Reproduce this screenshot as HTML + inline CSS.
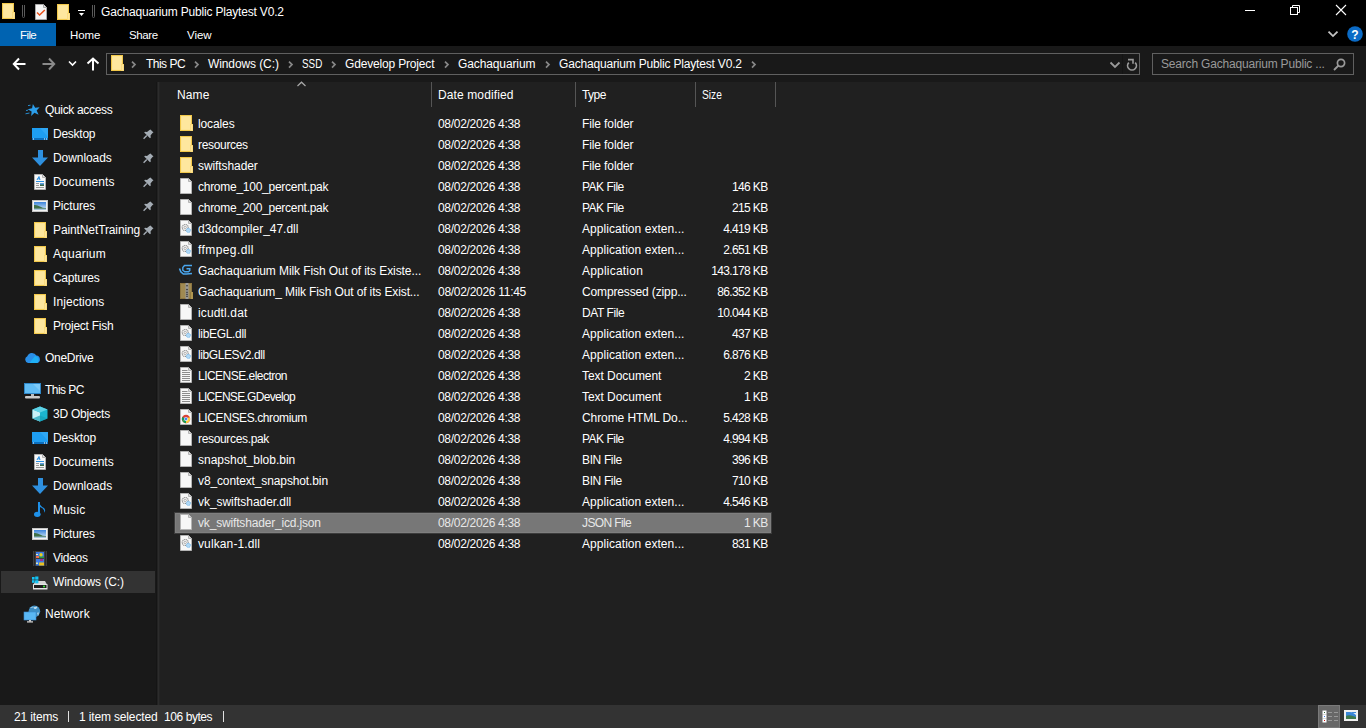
<!DOCTYPE html>
<html><head><meta charset="utf-8"><style>
html,body{margin:0;padding:0}
body{width:1366px;height:728px;overflow:hidden;position:relative;background:#202020;font-family:"Liberation Sans",sans-serif;}
.t{position:absolute;white-space:nowrap;line-height:1;}
.r{position:absolute}
.i{position:absolute;overflow:visible}
</style></head><body>
<svg width="0" height="0" style="position:absolute">
<symbol id="folder" viewBox="0 0 13 16">
 <rect x="0.5" y="0.5" width="11" height="15" fill="#fde28c" stroke="#f2c84a"/>
 <rect x="1.5" y="1.5" width="9" height="13" fill="#fee79e"/>
 <rect x="10" y="9" width="3" height="7" fill="#f6d064"/>
 <rect x="10.5" y="9.5" width="2" height="6" fill="#fde59a"/>
</symbol>
<symbol id="doc" viewBox="0 0 12 16">
 <path d="M0.5 0.5H8.5L11.5 3.5V15.5H0.5Z" fill="#f7f7f7" stroke="#b4b4b4"/>
 <path d="M8.5 0.5V3.5H11.5" fill="#d8d8d8" stroke="#b4b4b4"/>
</symbol>
<symbol id="dll" viewBox="0 0 12 16">
 <use href="#doc"/>
 <circle cx="5.2" cy="7.5" r="3" fill="none" stroke="#8e8e8e" stroke-width="1.1" stroke-dasharray="1.2 0.6"/>
 <circle cx="5.2" cy="7.5" r="1.2" fill="none" stroke="#a0a0a0" stroke-width="0.8"/>
 <circle cx="8.4" cy="10.4" r="2.1" fill="#b0d8f5" stroke="#64aee8" stroke-width="0.8" stroke-dasharray="1 0.5"/>
</symbol>
<symbol id="txt" viewBox="0 0 12 16">
 <use href="#doc"/>
 <path d="M2 3.5H7.5M2 5.5H10M2 7.5H10M2 9.5H10M2 11.5H10M2 13.5H10" stroke="#8c8c8c" stroke-width="1"/>
</symbol>
<symbol id="chromedoc" viewBox="0 0 12 16">
 <use href="#doc"/>
 <circle cx="6" cy="10" r="4.2" fill="#db4437"/>
 <path d="M6 10 L2.36 12.1 A4.2 4.2 0 0 1 2.36 7.9 Z" fill="#0f9d58"/>
 <path d="M6 10 L9.64 7.9 A4.2 4.2 0 0 1 6 14.2 L 2.36 12.1Z" fill="#ffcd40"/>
 <path d="M6 10 L2.36 12.1 A4.2 4.2 0 0 0 6 14.2Z" fill="#0f9d58"/>
 <circle cx="6" cy="10" r="1.9" fill="#fff"/>
 <circle cx="6" cy="10" r="1.4" fill="#4285f4"/>
</symbol>
</svg>
<div class="r" style="left:0px;top:0px;width:1366px;height:46px;background:#000;"></div>
<div class="r" style="left:0px;top:46px;width:1366px;height:36px;background:#191919;"></div>
<div class="r" style="left:0px;top:82px;width:157px;height:623px;background:#191919;"></div>
<div class="r" style="left:157px;top:82px;width:1209px;height:623px;background:#202020;"></div>
<div class="r" style="left:156px;top:82px;width:1px;height:623px;background:#151515;"></div>
<div class="r" style="left:157px;top:82px;width:1px;height:623px;background:#222;"></div>
<div class="r" style="left:158px;top:82px;width:1px;height:623px;background:#2c2c2c;"></div>
<div class="r" style="left:159px;top:82px;width:1px;height:623px;background:#242424;"></div>
<div class="r" style="left:0px;top:705px;width:1366px;height:23px;background:#333;"></div>
<svg class="i" style="left:2px;top:3px" width="13" height="16" viewBox="0 0 13 16"><use href="#folder"/></svg>
<svg class="i" style="left:22px;top:5px" width="3" height="13" viewBox="0 0 3 13"><path d="M0.5 0V11.5A1 1 0 0 0 2.5 11.5V0" fill="none" stroke="#5a5a5a" stroke-width="1"/></svg>
<svg class="i" style="left:35px;top:4px" width="12" height="16" viewBox="0 0 12 16"><path d="M0.5 0.5H8.5L11.5 3.5V15.5H0.5Z" fill="#f5f5f5" stroke="#a8a8a8"/><path d="M8.5 0.5V3.5H11.5" fill="#ddd" stroke="#a8a8a8"/><path d="M2 8.5L4.6 11L9.8 6" fill="none" stroke="#e8501a" stroke-width="1.5"/></svg>
<svg class="i" style="left:57px;top:4px" width="13" height="16" viewBox="0 0 13 16"><use href="#folder"/></svg>
<svg class="i" style="left:78px;top:9px" width="8" height="8" viewBox="0 0 8 8"><rect x="0" y="1" width="7" height="1" fill="#fff"/><path d="M1 4H6L3.5 7Z" fill="#fff"/></svg>
<svg class="i" style="left:92px;top:5px" width="3" height="13" viewBox="0 0 3 13"><path d="M0.5 0V11.5A1 1 0 0 0 2.5 11.5V0" fill="none" stroke="#5a5a5a" stroke-width="1"/></svg>
<div class="t" style="left:101px;top:5.84px;color:#fff;font-size:12px;letter-spacing:-0.18px;">Gachaquarium Public Playtest V0.2</div>
<div class="r" style="left:1245px;top:10px;width:10px;height:1px;background:#fff;"></div>
<svg class="i" style="left:1289px;top:4px" width="12" height="12" viewBox="0 0 12 12"><rect x="1.5" y="3.5" width="7" height="7" fill="none" stroke="#fff"/><path d="M3.5 3.5V1.5H10.5V8.5H8.5" fill="none" stroke="#fff"/></svg>
<svg class="i" style="left:1335px;top:4px" width="12" height="12" viewBox="0 0 12 12"><path d="M1 1L11 11M11 1L1 11" stroke="#fff" stroke-width="1.1"/></svg>
<div class="r" style="left:0px;top:23px;width:56px;height:23px;background:#0063b1;"></div>
<div class="t" style="left:20px;top:30.27px;color:#fff;font-size:11.5px;letter-spacing:-0.6px;">File</div>
<div class="t" style="left:70px;top:30.27px;color:#fff;font-size:11.5px;letter-spacing:-0.134px;">Home</div>
<div class="t" style="left:129px;top:30.27px;color:#fff;font-size:11.5px;letter-spacing:-0.4px;">Share</div>
<div class="t" style="left:187px;top:30.27px;color:#fff;font-size:11.5px;letter-spacing:-0.066px;">View</div>
<svg class="i" style="left:1327px;top:29px" width="12" height="10" viewBox="0 0 12 10"><path d="M1.5 2.6L6 7.1L10.5 2.6" fill="none" stroke="#c4c4c4" stroke-width="1.8"/></svg>
<svg class="i" style="left:1347px;top:26px" width="16" height="16" viewBox="0 0 16 16"><circle cx="8" cy="8" r="7.8" fill="#0b6bc6"/><text x="8" y="12.6" text-anchor="middle" font-family="Liberation Sans" font-weight="bold" font-size="12" fill="#fff">?</text></svg>
<svg class="i" style="left:12px;top:57px" width="14" height="14" viewBox="0 0 14 14"><path d="M7 1.5L1.8 7L7 12.5M2 7H13.5" fill="none" stroke="#fff" stroke-width="2"/></svg>
<svg class="i" style="left:42px;top:57px" width="14" height="14" viewBox="0 0 14 14"><path d="M7 1.5L12.2 7L7 12.5M12 7H0.5" fill="none" stroke="#8a8a8a" stroke-width="2"/></svg>
<svg class="i" style="left:68px;top:59px" width="9" height="8" viewBox="0 0 9 8"><path d="M1 2.5L4.5 6L8 2.5" fill="none" stroke="#fff" stroke-width="1.6"/></svg>
<svg class="i" style="left:86px;top:57px" width="14" height="14" viewBox="0 0 14 14"><path d="M1.5 6.5L7 1.5L12.5 6.5M7 2V13.5" fill="none" stroke="#fff" stroke-width="2"/></svg>
<div class="r" style="left:106px;top:53px;width:1034px;height:22px;background:transparent;border:1px solid #606060;box-sizing:border-box"></div>
<div class="r" style="left:1122px;top:54px;width:1px;height:20px;background:#141414;"></div>
<svg class="i" style="left:111px;top:55px" width="13" height="16" viewBox="0 0 13 16"><use href="#folder"/></svg>
<svg class="i" style="left:131px;top:61px" width="6" height="8" viewBox="0 0 6 8"><path d="M1 0.6L4 3.6L1 6.6" fill="none" stroke="#888" stroke-width="1.7"/></svg>
<svg class="i" style="left:194px;top:61px" width="6" height="8" viewBox="0 0 6 8"><path d="M1 0.6L4 3.6L1 6.6" fill="none" stroke="#888" stroke-width="1.7"/></svg>
<svg class="i" style="left:288px;top:61px" width="6" height="8" viewBox="0 0 6 8"><path d="M1 0.6L4 3.6L1 6.6" fill="none" stroke="#888" stroke-width="1.7"/></svg>
<svg class="i" style="left:331px;top:61px" width="6" height="8" viewBox="0 0 6 8"><path d="M1 0.6L4 3.6L1 6.6" fill="none" stroke="#888" stroke-width="1.7"/></svg>
<svg class="i" style="left:444px;top:61px" width="6" height="8" viewBox="0 0 6 8"><path d="M1 0.6L4 3.6L1 6.6" fill="none" stroke="#888" stroke-width="1.7"/></svg>
<svg class="i" style="left:545px;top:61px" width="6" height="8" viewBox="0 0 6 8"><path d="M1 0.6L4 3.6L1 6.6" fill="none" stroke="#888" stroke-width="1.7"/></svg>
<svg class="i" style="left:751px;top:61px" width="6" height="8" viewBox="0 0 6 8"><path d="M1 0.6L4 3.6L1 6.6" fill="none" stroke="#888" stroke-width="1.7"/></svg>
<div class="t" style="left:146px;top:57.84px;color:#fff;font-size:12px;letter-spacing:-0.516px;">This PC</div>
<div class="t" style="left:208px;top:57.84px;color:#fff;font-size:12px;letter-spacing:-0.1px;">Windows (C:)</div>
<div class="t" style="left:302px;top:57.84px;color:#fff;font-size:12px;letter-spacing:0.0px;transform:scaleX(0.82);transform-origin:0 0;">SSD</div>
<div class="t" style="left:345px;top:57.84px;color:#fff;font-size:12px;letter-spacing:-0.171px;">Gdevelop Project</div>
<div class="t" style="left:458px;top:57.84px;color:#fff;font-size:12px;letter-spacing:-0.112px;">Gachaquarium</div>
<div class="t" style="left:559px;top:57.84px;color:#fff;font-size:12px;letter-spacing:-0.18px;">Gachaquarium Public Playtest V0.2</div>
<svg class="i" style="left:1109px;top:61px" width="12" height="8" viewBox="0 0 12 8"><path d="M1.5 1.5L6 6L10.5 1.5" fill="none" stroke="#9a9a9a" stroke-width="1.8"/></svg>
<svg class="i" style="left:1126px;top:58px" width="12" height="13" viewBox="0 0 12 13"><path d="M2.8 4.6A4.4 4.4 0 1 0 9.2 4.6" fill="none" stroke="#9a9a9a" stroke-width="1.7"/><path d="M2 1.6H7V5.8" fill="none" stroke="#9a9a9a" stroke-width="1.6"/></svg>
<div class="r" style="left:1152px;top:53px;width:202px;height:22px;background:transparent;border:1px solid #606060;box-sizing:border-box"></div>
<div class="t" style="left:1161px;top:57.84px;color:#999;font-size:12px;letter-spacing:-0.189px;">Search Gachaquarium Public ...</div>
<svg class="i" style="left:1332px;top:58px" width="14" height="14" viewBox="0 0 14 14"><circle cx="9" cy="5" r="3.6" fill="none" stroke="#9a9a9a" stroke-width="1.7"/><path d="M6.5 7.5L2 12" stroke="#9a9a9a" stroke-width="1.8"/></svg>
<div class="r" style="left:1px;top:571px;width:154px;height:22px;background:#333;"></div>
<div class="t" style="left:45px;top:103.84px;color:#fff;font-size:12px;letter-spacing:-0.332px;">Quick access</div>
<svg class="i" style="left:25px;top:103px" width="17" height="14" viewBox="0 0 17 14"><path d="M7.89 0.90L10.18 4.77L14.65 4.20L11.67 7.58L13.60 11.65L9.47 9.86L6.19 12.95L6.62 8.47L2.66 6.31L7.06 5.32Z" fill="#2c9eea"/><path d="M3 2.6L5.5 2.2M1 7.5L3 7.2M0.5 10.8L4.5 10" stroke="#2c9eea" stroke-width="1" opacity="0.85"/></svg>
<div class="t" style="left:53px;top:127.84px;color:#fff;font-size:12px;letter-spacing:-0.251px;">Desktop</div>
<svg class="i" style="left:32px;top:128px" width="16" height="12" viewBox="0 0 16 12"><rect x="0" y="0" width="16" height="12" fill="#1e9ef2"/><path d="M8 0L16 0L16 9Z" fill="#3fb0f7" opacity="0.5"/><rect x="0" y="10" width="16" height="2" fill="#0b6fbf"/><rect x="1" y="10.5" width="1" height="1" fill="#fff"/><rect x="12" y="10.5" width="1" height="1" fill="#fff"/><rect x="14" y="10.5" width="1" height="1" fill="#fff"/></svg>
<div class="t" style="left:53px;top:151.84px;color:#fff;font-size:12px;letter-spacing:-0.073px;">Downloads</div>
<svg class="i" style="left:32px;top:150px" width="16" height="16" viewBox="0 0 16 16"><rect x="6" y="0" width="5" height="8" fill="#2e90df"/><path d="M0 7.5H16L8 16Z" fill="#2e90df"/></svg>
<div class="t" style="left:53px;top:175.84px;color:#fff;font-size:12px;letter-spacing:0.1px;">Documents</div>
<svg class="i" style="left:34px;top:174px" width="12" height="16" viewBox="0 0 12 16"><path d="M0.5 0.5H8.5L11.5 3.5V15.5H0.5Z" fill="#f7f7f7" stroke="#b0b0b0"/><path d="M8.5 0.5V3.5H11.5" fill="#ddd" stroke="#b0b0b0"/><path d="M3 6L5 2.5L6 6M3.5 4.8H6" stroke="#2b8fe0" fill="none" stroke-width="1"/><rect x="2" y="7" width="8" height="1" fill="#2b8fe0"/><path d="M2 9.5H5M2 11.5H5M2 13.5H10" stroke="#9a9a9a"/><rect x="6" y="9" width="4" height="3" fill="#5a9ee0"/><rect x="6" y="10.5" width="4" height="1.5" fill="#3a6a48"/></svg>
<div class="t" style="left:53px;top:199.84px;color:#fff;font-size:12px;letter-spacing:-0.15px;">Pictures</div>
<svg class="i" style="left:32px;top:200px" width="16" height="12" viewBox="0 0 16 12"><defs><linearGradient id="sky" x1="0" y1="0" x2="0" y2="1"><stop offset="0" stop-color="#3b82da"/><stop offset="1" stop-color="#d8ecf8"/></linearGradient></defs><rect x="0.5" y="0.5" width="15" height="11" fill="#f2f2f2" stroke="#c4c4c4"/><rect x="2" y="2" width="12" height="8" fill="url(#sky)"/><path d="M2 5Q5 4.5 8 6.5Q11 8.2 14 8V10H2Z" fill="#3f7049"/><path d="M2 8.6H14V10H2Z" fill="#a8c6dc"/></svg>
<div class="t" style="left:53px;top:223.84px;color:#fff;font-size:12px;letter-spacing:-0.111px;">PaintNetTraining</div>
<svg class="i" style="left:34px;top:222px" width="13" height="16" viewBox="0 0 13 16"><use href="#folder"/></svg>
<div class="t" style="left:53px;top:247.84px;color:#fff;font-size:12px;letter-spacing:0.193px;">Aquarium</div>
<svg class="i" style="left:34px;top:246px" width="13" height="16" viewBox="0 0 13 16"><use href="#folder"/></svg>
<div class="t" style="left:53px;top:271.84px;color:#fff;font-size:12px;letter-spacing:-0.293px;">Captures</div>
<svg class="i" style="left:34px;top:270px" width="13" height="16" viewBox="0 0 13 16"><use href="#folder"/></svg>
<div class="t" style="left:53px;top:295.84px;color:#fff;font-size:12px;letter-spacing:0.072px;">Injections</div>
<svg class="i" style="left:34px;top:294px" width="13" height="16" viewBox="0 0 13 16"><use href="#folder"/></svg>
<div class="t" style="left:53px;top:319.84px;color:#fff;font-size:12px;letter-spacing:-0.24px;">Project Fish</div>
<svg class="i" style="left:34px;top:318px" width="13" height="16" viewBox="0 0 13 16"><use href="#folder"/></svg>
<div class="t" style="left:45px;top:351.84px;color:#fff;font-size:12px;letter-spacing:-0.293px;">OneDrive</div>
<svg class="i" style="left:24px;top:352px" width="17" height="11" viewBox="0 0 17 11"><path d="M4 11A3.6 3.6 0 0 1 3.3 4.2A5 5 0 0 1 12.4 3.6A3.8 3.8 0 0 1 13.3 11Z" fill="#2a8fe8"/><path d="M5.5 11L11 4A4 4 0 0 1 13.3 11Z" fill="#1fb0f5"/></svg>
<div class="t" style="left:45px;top:383.84px;color:#fff;font-size:12px;letter-spacing:-0.551px;">This PC</div>
<svg class="i" style="left:24px;top:383px" width="17" height="16" viewBox="0 0 17 16"><rect x="0.5" y="0.5" width="16" height="10" fill="#62bdf5" stroke="#2f87c8"/><path d="M9 1L16 1L16 8Z" fill="#8fd2fa" opacity="0.6"/><rect x="7" y="11" width="3" height="2" fill="#bbb"/><rect x="1" y="13" width="15" height="2.5" rx="1" fill="#c9c9c9"/></svg>
<div class="t" style="left:53px;top:407.84px;color:#fff;font-size:12px;letter-spacing:-0.238px;">3D Objects</div>
<svg class="i" style="left:32px;top:406px" width="16" height="16" viewBox="0 0 16 16"><path d="M8 0.5L15.5 3.5V12.5L8 15.5L0.5 12.5V3.5Z" fill="#1bb5d0"/><path d="M0.5 3.5L8 6.5V15.5L0.5 12.5Z" fill="#c8f0f6"/><path d="M8 0.5L15.5 3.5L8 6.5L0.5 3.5Z" fill="#5fd2e6"/><path d="M0.5 12.5L8 9.5L15.5 12.5L8 15.5Z" fill="#15a0b8" opacity="0.7"/></svg>
<div class="t" style="left:53px;top:431.84px;color:#fff;font-size:12px;letter-spacing:-0.15px;">Desktop</div>
<svg class="i" style="left:32px;top:432px" width="16" height="12" viewBox="0 0 16 12"><rect x="0" y="0" width="16" height="12" fill="#1e9ef2"/><path d="M8 0L16 0L16 9Z" fill="#3fb0f7" opacity="0.5"/><rect x="0" y="10" width="16" height="2" fill="#0b6fbf"/><rect x="1" y="10.5" width="1" height="1" fill="#fff"/><rect x="12" y="10.5" width="1" height="1" fill="#fff"/><rect x="14" y="10.5" width="1" height="1" fill="#fff"/></svg>
<div class="t" style="left:53px;top:455.84px;color:#fff;font-size:12px;letter-spacing:-0.0px;">Documents</div>
<svg class="i" style="left:34px;top:454px" width="12" height="16" viewBox="0 0 12 16"><path d="M0.5 0.5H8.5L11.5 3.5V15.5H0.5Z" fill="#f7f7f7" stroke="#b0b0b0"/><path d="M8.5 0.5V3.5H11.5" fill="#ddd" stroke="#b0b0b0"/><path d="M3 6L5 2.5L6 6M3.5 4.8H6" stroke="#2b8fe0" fill="none" stroke-width="1"/><rect x="2" y="7" width="8" height="1" fill="#2b8fe0"/><path d="M2 9.5H5M2 11.5H5M2 13.5H10" stroke="#9a9a9a"/><rect x="6" y="9" width="4" height="3" fill="#5a9ee0"/><rect x="6" y="10.5" width="4" height="1.5" fill="#3a6a48"/></svg>
<div class="t" style="left:53px;top:479.84px;color:#fff;font-size:12px;letter-spacing:-0.025px;">Downloads</div>
<svg class="i" style="left:32px;top:478px" width="16" height="16" viewBox="0 0 16 16"><rect x="6" y="0" width="5" height="8" fill="#2e90df"/><path d="M0 7.5H16L8 16Z" fill="#2e90df"/></svg>
<div class="t" style="left:53px;top:503.84px;color:#fff;font-size:12px;letter-spacing:0.2px;">Music</div>
<svg class="i" style="left:34px;top:501px" width="12" height="17" viewBox="0 0 12 17"><path d="M5 1V12" stroke="#1e90e8" stroke-width="2"/><ellipse cx="3.3" cy="13.3" rx="3.3" ry="2.6" fill="#1e90e8"/><path d="M5 1Q6 5 10 7Q12 9 10.5 12Q11 8 6 6Z" fill="#1e90e8"/></svg>
<div class="t" style="left:53px;top:527.84px;color:#fff;font-size:12px;letter-spacing:-0.206px;">Pictures</div>
<svg class="i" style="left:32px;top:528px" width="16" height="12" viewBox="0 0 16 12"><defs><linearGradient id="sky" x1="0" y1="0" x2="0" y2="1"><stop offset="0" stop-color="#3b82da"/><stop offset="1" stop-color="#d8ecf8"/></linearGradient></defs><rect x="0.5" y="0.5" width="15" height="11" fill="#f2f2f2" stroke="#c4c4c4"/><rect x="2" y="2" width="12" height="8" fill="url(#sky)"/><path d="M2 5Q5 4.5 8 6.5Q11 8.2 14 8V10H2Z" fill="#3f7049"/><path d="M2 8.6H14V10H2Z" fill="#a8c6dc"/></svg>
<div class="t" style="left:53px;top:551.84px;color:#fff;font-size:12px;letter-spacing:-0.31px;">Videos</div>
<svg class="i" style="left:33px;top:551px" width="14" height="15" viewBox="0 0 14 15"><rect x="0" y="0" width="14" height="15" fill="#3e3e3e"/><path d="M1.5 0.5V15M12.5 0.5V15" stroke="#121212" stroke-dasharray="1 1"/><rect x="3" y="1" width="8" height="6" fill="#3d7be2"/><rect x="3" y="8" width="8" height="6.5" fill="#3d7be2"/><rect x="3" y="5" width="3" height="2" fill="#f07050"/><rect x="6" y="5.5" width="5" height="1.5" fill="#2a9a40"/><circle cx="8" cy="3.8" r="1.7" fill="#e6d020"/><rect x="3" y="3" width="2" height="1" fill="#e8f0c0"/><rect x="7" y="8" width="3" height="2" fill="#a03090"/><rect x="6" y="11.5" width="5" height="3" fill="#e8c020"/><rect x="3" y="11.5" width="2" height="1.5" fill="#d8e8b8"/></svg>
<div class="t" style="left:53px;top:575.84px;color:#fff;font-size:12px;letter-spacing:-0.097px;">Windows (C:)</div>
<svg class="i" style="left:31px;top:571px" width="17" height="19" viewBox="0 0 17 19"><path d="M2.5 13.5L4.5 10H14L16 13.5Z" fill="#d6d6d6"/><rect x="2" y="13" width="14.5" height="5.5" rx="0.6" fill="#e4e4e4"/><rect x="3" y="14" width="12.5" height="3" fill="#1c1c1c"/><circle cx="13" cy="15.5" r="1" fill="#3ef03e"/><rect x="1" y="6" width="2.6" height="2.6" fill="#12c3f4"/><rect x="4.2" y="5.5" width="3.2" height="3.1" fill="#12c3f4"/><rect x="1" y="9.2" width="2.6" height="2.6" fill="#12c3f4"/><rect x="4.2" y="9.2" width="3.2" height="3.1" fill="#12c3f4"/></svg>
<div class="t" style="left:45px;top:607.84px;color:#fff;font-size:12px;letter-spacing:0.116px;">Network</div>
<svg class="i" style="left:23px;top:601px" width="18" height="22" viewBox="0 0 18 22"><circle cx="11.4" cy="10.3" r="5.8" fill="#3d8ec4"/><path d="M7 7Q9 5 11 6Q10 8 13 8Q15 6 14 5.5Z" fill="#d8f0fb" opacity="0.8"/><path d="M15.5 11Q16.5 13 15 15L14 12Z" fill="#d8f0fb" opacity="0.7"/><rect x="1" y="11" width="12" height="8" fill="#5ab8f5" stroke="#3a8ad0" stroke-width="0.6"/><rect x="6" y="19" width="2" height="1.5" fill="#ccc"/><rect x="4" y="20.3" width="6" height="1.2" fill="#ddd"/></svg>
<svg class="i" style="left:143px;top:129px" width="11" height="11" viewBox="0 0 11 11"><path d="M7.5 0.5L10.5 3.5L9.5 4L7.5 6.5L7.8 8.5L7 9.3L1.2 3.5L2 2.7L4 3L6.5 1Z" fill="#a4acb4"/><path d="M3.8 6.6L0.6 9.8" stroke="#a4acb4" stroke-width="1.4"/></svg>
<svg class="i" style="left:143px;top:153px" width="11" height="11" viewBox="0 0 11 11"><path d="M7.5 0.5L10.5 3.5L9.5 4L7.5 6.5L7.8 8.5L7 9.3L1.2 3.5L2 2.7L4 3L6.5 1Z" fill="#a4acb4"/><path d="M3.8 6.6L0.6 9.8" stroke="#a4acb4" stroke-width="1.4"/></svg>
<svg class="i" style="left:143px;top:177px" width="11" height="11" viewBox="0 0 11 11"><path d="M7.5 0.5L10.5 3.5L9.5 4L7.5 6.5L7.8 8.5L7 9.3L1.2 3.5L2 2.7L4 3L6.5 1Z" fill="#a4acb4"/><path d="M3.8 6.6L0.6 9.8" stroke="#a4acb4" stroke-width="1.4"/></svg>
<svg class="i" style="left:143px;top:201px" width="11" height="11" viewBox="0 0 11 11"><path d="M7.5 0.5L10.5 3.5L9.5 4L7.5 6.5L7.8 8.5L7 9.3L1.2 3.5L2 2.7L4 3L6.5 1Z" fill="#a4acb4"/><path d="M3.8 6.6L0.6 9.8" stroke="#a4acb4" stroke-width="1.4"/></svg>
<svg class="i" style="left:143px;top:225px" width="11" height="11" viewBox="0 0 11 11"><path d="M7.5 0.5L10.5 3.5L9.5 4L7.5 6.5L7.8 8.5L7 9.3L1.2 3.5L2 2.7L4 3L6.5 1Z" fill="#a4acb4"/><path d="M3.8 6.6L0.6 9.8" stroke="#a4acb4" stroke-width="1.4"/></svg>
<svg class="i" style="left:296px;top:81px" width="11" height="7" viewBox="0 0 11 7"><path d="M1.5 5L5.5 1.2L9.5 5" fill="none" stroke="#a8a8a8" stroke-width="1.2"/></svg>
<div class="t" style="left:177px;top:88.84px;color:#fff;font-size:12px;letter-spacing:0.118px;">Name</div>
<div class="t" style="left:438px;top:88.84px;color:#fff;font-size:12px;letter-spacing:0.116px;">Date modified</div>
<div class="t" style="left:582px;top:88.84px;color:#fff;font-size:12px;letter-spacing:-0.567px;">Type</div>
<div class="t" style="left:702px;top:88.84px;color:#fff;font-size:12px;letter-spacing:0.0px;transform:scaleX(0.85);transform-origin:0 0;">Size</div>
<div class="r" style="left:431px;top:82px;width:1px;height:25px;background:#555;"></div>
<div class="r" style="left:575px;top:82px;width:1px;height:25px;background:#555;"></div>
<div class="r" style="left:695px;top:82px;width:1px;height:25px;background:#555;"></div>
<div class="r" style="left:775px;top:82px;width:1px;height:25px;background:#555;"></div>
<svg class="i" style="left:180px;top:115px" width="13" height="16" viewBox="0 0 13 16"><use href="#folder"/></svg>
<div class="t" style="left:198px;top:117.84px;color:#fff;font-size:12px;letter-spacing:-0.117px;">locales</div>
<div class="t" style="left:438px;top:117.84px;color:#fff;font-size:12px;letter-spacing:-0.3px;">08/02/2026 4:38</div>
<div class="t" style="left:582px;top:117.84px;color:#fff;font-size:12px;letter-spacing:-0.11px;">File folder</div>
<svg class="i" style="left:180px;top:136px" width="13" height="16" viewBox="0 0 13 16"><use href="#folder"/></svg>
<div class="t" style="left:198px;top:138.84px;color:#fff;font-size:12px;letter-spacing:-0.323px;">resources</div>
<div class="t" style="left:438px;top:138.84px;color:#fff;font-size:12px;letter-spacing:-0.3px;">08/02/2026 4:38</div>
<div class="t" style="left:582px;top:138.84px;color:#fff;font-size:12px;letter-spacing:-0.11px;">File folder</div>
<svg class="i" style="left:180px;top:157px" width="13" height="16" viewBox="0 0 13 16"><use href="#folder"/></svg>
<div class="t" style="left:198px;top:159.84px;color:#fff;font-size:12px;letter-spacing:-0.09px;">swiftshader</div>
<div class="t" style="left:438px;top:159.84px;color:#fff;font-size:12px;letter-spacing:-0.3px;">08/02/2026 4:38</div>
<div class="t" style="left:582px;top:159.84px;color:#fff;font-size:12px;letter-spacing:-0.11px;">File folder</div>
<svg class="i" style="left:180px;top:178px" width="12" height="16" viewBox="0 0 12 16"><use href="#doc"/></svg>
<div class="t" style="left:198px;top:180.84px;color:#fff;font-size:12px;letter-spacing:-0.265px;">chrome_100_percent.pak</div>
<div class="t" style="left:438px;top:180.84px;color:#fff;font-size:12px;letter-spacing:-0.3px;">08/02/2026 4:38</div>
<div class="t" style="left:582px;top:180.84px;color:#fff;font-size:12px;letter-spacing:-0.506px;">PAK File</div>
<div class="t" style="right:598.5px;top:180.84px;color:#fff;font-size:12px;letter-spacing:-0.65px;">146 KB</div>
<svg class="i" style="left:180px;top:199px" width="12" height="16" viewBox="0 0 12 16"><use href="#doc"/></svg>
<div class="t" style="left:198px;top:201.84px;color:#fff;font-size:12px;letter-spacing:-0.265px;">chrome_200_percent.pak</div>
<div class="t" style="left:438px;top:201.84px;color:#fff;font-size:12px;letter-spacing:-0.3px;">08/02/2026 4:38</div>
<div class="t" style="left:582px;top:201.84px;color:#fff;font-size:12px;letter-spacing:-0.506px;">PAK File</div>
<div class="t" style="right:598.5px;top:201.84px;color:#fff;font-size:12px;letter-spacing:-0.65px;">215 KB</div>
<svg class="i" style="left:180px;top:220px" width="12" height="16" viewBox="0 0 12 16"><use href="#dll"/></svg>
<div class="t" style="left:198px;top:222.84px;color:#fff;font-size:12px;letter-spacing:-0.021px;">d3dcompiler_47.dll</div>
<div class="t" style="left:438px;top:222.84px;color:#fff;font-size:12px;letter-spacing:-0.3px;">08/02/2026 4:38</div>
<div class="t" style="left:582px;top:222.84px;color:#fff;font-size:12px;letter-spacing:0.055px;">Application exten...</div>
<div class="t" style="right:598.5px;top:222.84px;color:#fff;font-size:12px;letter-spacing:-0.65px;">4.419 KB</div>
<svg class="i" style="left:180px;top:241px" width="12" height="16" viewBox="0 0 12 16"><use href="#dll"/></svg>
<div class="t" style="left:198px;top:243.84px;color:#fff;font-size:12px;letter-spacing:0.406px;">ffmpeg.dll</div>
<div class="t" style="left:438px;top:243.84px;color:#fff;font-size:12px;letter-spacing:-0.3px;">08/02/2026 4:38</div>
<div class="t" style="left:582px;top:243.84px;color:#fff;font-size:12px;letter-spacing:0.055px;">Application exten...</div>
<div class="t" style="right:598.5px;top:243.84px;color:#fff;font-size:12px;letter-spacing:-0.65px;">2.651 KB</div>
<svg class="i" style="left:177px;top:262px" width="16" height="14" viewBox="0 0 16 14"><path d="M15 3.5H7.5L5.8 5.5V8.2L7.8 9.8H11.6L12.8 8.4V6.8H9.5" fill="none" stroke="#4aa6ee" stroke-width="1.4"/><path d="M2.5 6.5L3.8 9.8L6.3 12H9.5L15 11.5" fill="none" stroke="#4aa6ee" stroke-width="1.6"/></svg>
<div class="t" style="left:198px;top:264.84px;color:#fff;font-size:12px;letter-spacing:-0.083px;">Gachaquarium Milk Fish Out of its Existe...</div>
<div class="t" style="left:438px;top:264.84px;color:#fff;font-size:12px;letter-spacing:-0.3px;">08/02/2026 4:38</div>
<div class="t" style="left:582px;top:264.84px;color:#fff;font-size:12px;letter-spacing:0.21px;">Application</div>
<div class="t" style="right:598.5px;top:264.84px;color:#fff;font-size:12px;letter-spacing:-0.65px;">143.178 KB</div>
<svg class="i" style="left:180px;top:283px" width="13" height="16" viewBox="0 0 13 16"><rect x="0" y="0" width="12" height="16" fill="#a08a52"/><rect x="0.5" y="0.5" width="11" height="15" fill="none" stroke="#8c7540"/><rect x="5.5" y="0" width="3" height="16" fill="#9a9a9a"/><circle cx="7" cy="2.8" r="0.8" fill="#2a2a2a"/><circle cx="7" cy="6.6" r="0.8" fill="#2a2a2a"/><path d="M6 9.5L7 9M7 9L8 9.5M6 11.5L7 11M7 11L8 11.5M6 13.5L7 13M7 13L8 13.5" stroke="#303030" stroke-width="0.9"/><rect x="10" y="9" width="3" height="7" fill="#b09650"/><path d="M10.5 9V16" stroke="#8c7540" stroke-width="0.8"/></svg>
<div class="t" style="left:198px;top:285.84px;color:#fff;font-size:12px;letter-spacing:-0.122px;">Gachaquarium_ Milk Fish Out of its Exist...</div>
<div class="t" style="left:438px;top:285.84px;color:#fff;font-size:12px;letter-spacing:-0.286px;">08/02/2026 11:45</div>
<div class="t" style="left:582px;top:285.84px;color:#fff;font-size:12px;letter-spacing:-0.138px;">Compressed (zipp...</div>
<div class="t" style="right:598.5px;top:285.84px;color:#fff;font-size:12px;letter-spacing:-0.65px;">86.352 KB</div>
<svg class="i" style="left:180px;top:304px" width="12" height="16" viewBox="0 0 12 16"><use href="#doc"/></svg>
<div class="t" style="left:198px;top:306.84px;color:#fff;font-size:12px;letter-spacing:0.139px;">icudtl.dat</div>
<div class="t" style="left:438px;top:306.84px;color:#fff;font-size:12px;letter-spacing:-0.3px;">08/02/2026 4:38</div>
<div class="t" style="left:582px;top:306.84px;color:#fff;font-size:12px;letter-spacing:-0.422px;">DAT File</div>
<div class="t" style="right:598.5px;top:306.84px;color:#fff;font-size:12px;letter-spacing:-0.65px;">10.044 KB</div>
<svg class="i" style="left:180px;top:325px" width="12" height="16" viewBox="0 0 12 16"><use href="#dll"/></svg>
<div class="t" style="left:198px;top:327.84px;color:#fff;font-size:12px;letter-spacing:-0.327px;">libEGL.dll</div>
<div class="t" style="left:438px;top:327.84px;color:#fff;font-size:12px;letter-spacing:-0.3px;">08/02/2026 4:38</div>
<div class="t" style="left:582px;top:327.84px;color:#fff;font-size:12px;letter-spacing:0.055px;">Application exten...</div>
<div class="t" style="right:598.5px;top:327.84px;color:#fff;font-size:12px;letter-spacing:-0.65px;">437 KB</div>
<svg class="i" style="left:180px;top:346px" width="12" height="16" viewBox="0 0 12 16"><use href="#dll"/></svg>
<div class="t" style="left:198px;top:348.84px;color:#fff;font-size:12px;letter-spacing:-0.4px;">libGLESv2.dll</div>
<div class="t" style="left:438px;top:348.84px;color:#fff;font-size:12px;letter-spacing:-0.3px;">08/02/2026 4:38</div>
<div class="t" style="left:582px;top:348.84px;color:#fff;font-size:12px;letter-spacing:0.055px;">Application exten...</div>
<div class="t" style="right:598.5px;top:348.84px;color:#fff;font-size:12px;letter-spacing:-0.65px;">6.876 KB</div>
<svg class="i" style="left:180px;top:367px" width="12" height="16" viewBox="0 0 12 16"><use href="#txt"/></svg>
<div class="t" style="left:198px;top:369.84px;color:#fff;font-size:12px;letter-spacing:-0.524px;">LICENSE.electron</div>
<div class="t" style="left:438px;top:369.84px;color:#fff;font-size:12px;letter-spacing:-0.3px;">08/02/2026 4:38</div>
<div class="t" style="left:582px;top:369.84px;color:#fff;font-size:12px;letter-spacing:-0.05px;">Text Document</div>
<div class="t" style="right:598.5px;top:369.84px;color:#fff;font-size:12px;letter-spacing:-0.65px;">2 KB</div>
<svg class="i" style="left:180px;top:388px" width="12" height="16" viewBox="0 0 12 16"><use href="#txt"/></svg>
<div class="t" style="left:198px;top:390.84px;color:#fff;font-size:12px;letter-spacing:-0.696px;">LICENSE.GDevelop</div>
<div class="t" style="left:438px;top:390.84px;color:#fff;font-size:12px;letter-spacing:-0.3px;">08/02/2026 4:38</div>
<div class="t" style="left:582px;top:390.84px;color:#fff;font-size:12px;letter-spacing:-0.05px;">Text Document</div>
<div class="t" style="right:598.5px;top:390.84px;color:#fff;font-size:12px;letter-spacing:-0.65px;">1 KB</div>
<svg class="i" style="left:180px;top:409px" width="12" height="16" viewBox="0 0 12 16"><use href="#chromedoc"/></svg>
<div class="t" style="left:198px;top:411.84px;color:#fff;font-size:12px;letter-spacing:-0.386px;">LICENSES.chromium</div>
<div class="t" style="left:438px;top:411.84px;color:#fff;font-size:12px;letter-spacing:-0.3px;">08/02/2026 4:38</div>
<div class="t" style="left:582px;top:411.84px;color:#fff;font-size:12px;letter-spacing:-0.087px;">Chrome HTML Do...</div>
<div class="t" style="right:598.5px;top:411.84px;color:#fff;font-size:12px;letter-spacing:-0.65px;">5.428 KB</div>
<svg class="i" style="left:180px;top:430px" width="12" height="16" viewBox="0 0 12 16"><use href="#doc"/></svg>
<div class="t" style="left:198px;top:432.84px;color:#fff;font-size:12px;letter-spacing:-0.334px;">resources.pak</div>
<div class="t" style="left:438px;top:432.84px;color:#fff;font-size:12px;letter-spacing:-0.3px;">08/02/2026 4:38</div>
<div class="t" style="left:582px;top:432.84px;color:#fff;font-size:12px;letter-spacing:-0.506px;">PAK File</div>
<div class="t" style="right:598.5px;top:432.84px;color:#fff;font-size:12px;letter-spacing:-0.65px;">4.994 KB</div>
<svg class="i" style="left:180px;top:451px" width="12" height="16" viewBox="0 0 12 16"><use href="#doc"/></svg>
<div class="t" style="left:198px;top:453.84px;color:#fff;font-size:12px;letter-spacing:-0.011px;">snapshot_blob.bin</div>
<div class="t" style="left:438px;top:453.84px;color:#fff;font-size:12px;letter-spacing:-0.3px;">08/02/2026 4:38</div>
<div class="t" style="left:582px;top:453.84px;color:#fff;font-size:12px;letter-spacing:-0.363px;">BIN File</div>
<div class="t" style="right:598.5px;top:453.84px;color:#fff;font-size:12px;letter-spacing:-0.65px;">396 KB</div>
<svg class="i" style="left:180px;top:472px" width="12" height="16" viewBox="0 0 12 16"><use href="#doc"/></svg>
<div class="t" style="left:198px;top:474.84px;color:#fff;font-size:12px;letter-spacing:-0.123px;">v8_context_snapshot.bin</div>
<div class="t" style="left:438px;top:474.84px;color:#fff;font-size:12px;letter-spacing:-0.3px;">08/02/2026 4:38</div>
<div class="t" style="left:582px;top:474.84px;color:#fff;font-size:12px;letter-spacing:-0.363px;">BIN File</div>
<div class="t" style="right:598.5px;top:474.84px;color:#fff;font-size:12px;letter-spacing:-0.65px;">710 KB</div>
<svg class="i" style="left:180px;top:493px" width="12" height="16" viewBox="0 0 12 16"><use href="#dll"/></svg>
<div class="t" style="left:198px;top:495.84px;color:#fff;font-size:12px;letter-spacing:-0.045px;">vk_swiftshader.dll</div>
<div class="t" style="left:438px;top:495.84px;color:#fff;font-size:12px;letter-spacing:-0.3px;">08/02/2026 4:38</div>
<div class="t" style="left:582px;top:495.84px;color:#fff;font-size:12px;letter-spacing:0.055px;">Application exten...</div>
<div class="t" style="right:598.5px;top:495.84px;color:#fff;font-size:12px;letter-spacing:-0.65px;">4.546 KB</div>
<div class="r" style="left:174px;top:512px;width:598px;height:22px;background:#777;border:1px solid #3c3c3c;box-shadow:inset 0 0 0 1px #7f7f7f;box-sizing:border-box"></div>
<svg class="i" style="left:180px;top:514px" width="12" height="16" viewBox="0 0 12 16"><use href="#doc"/></svg>
<div class="t" style="left:198px;top:516.84px;color:#e8e8e8;font-size:12px;letter-spacing:-0.168px;">vk_swiftshader_icd.json</div>
<div class="t" style="left:438px;top:516.84px;color:#e8e8e8;font-size:12px;letter-spacing:-0.3px;">08/02/2026 4:38</div>
<div class="t" style="left:582px;top:516.84px;color:#e8e8e8;font-size:12px;letter-spacing:-0.623px;">JSON File</div>
<div class="t" style="right:598.5px;top:516.84px;color:#e8e8e8;font-size:12px;letter-spacing:-0.65px;">1 KB</div>
<svg class="i" style="left:180px;top:535px" width="12" height="16" viewBox="0 0 12 16"><use href="#dll"/></svg>
<div class="t" style="left:198px;top:537.84px;color:#fff;font-size:12px;letter-spacing:0.122px;">vulkan-1.dll</div>
<div class="t" style="left:438px;top:537.84px;color:#fff;font-size:12px;letter-spacing:-0.3px;">08/02/2026 4:38</div>
<div class="t" style="left:582px;top:537.84px;color:#fff;font-size:12px;letter-spacing:0.055px;">Application exten...</div>
<div class="t" style="right:598.5px;top:537.84px;color:#fff;font-size:12px;letter-spacing:-0.65px;">831 KB</div>
<div class="t" style="left:14px;top:710.84px;color:#fff;font-size:12px;letter-spacing:-0.15px;">21 items</div>
<div class="r" style="left:68px;top:711px;width:1px;height:11px;background:#e0e0e0;"></div>
<div class="t" style="left:79px;top:710.84px;color:#fff;font-size:12px;letter-spacing:-0.15px;">1 item selected</div>
<div class="t" style="left:164px;top:710.84px;color:#fff;font-size:12px;letter-spacing:-0.427px;">106 bytes</div>
<div class="r" style="left:223px;top:711px;width:1px;height:11px;background:#e0e0e0;"></div>
<div class="r" style="left:1318px;top:705px;width:22px;height:23px;background:#686868;border:1px solid #7a7a7a;box-sizing:border-box"></div>
<svg class="i" style="left:1321px;top:709px" width="16" height="16" viewBox="0 0 16 16"><rect x="1.5" y="1.5" width="4" height="4" fill="#fff"/><rect x="1.5" y="5.5" width="4" height="4" fill="#fff"/><rect x="1.5" y="9.5" width="4" height="4" fill="#fff"/><rect x="3" y="3" width="1" height="1" fill="#3a6a3a"/><rect x="3" y="7" width="1" height="1" fill="#3a7ae8"/><rect x="3" y="11" width="1" height="1" fill="#d01010"/><path d="M7 3.5H11M13 3.5H17M7 7.5H11M13 7.5H17M7 11.5H11M13 11.5H17" stroke="#999"/></svg>
<svg class="i" style="left:1344px;top:710px" width="14" height="12" viewBox="0 0 14 12"><rect x="0" y="0" width="14" height="11" fill="#f0f0f0"/><rect x="2" y="2" width="10" height="7" fill="#3a86d8"/><path d="M2 6Q5 4 12 7V9H2Z" fill="#3f7a4f"/><path d="M6 3Q9 2 12 5V3Z" fill="#e8f4fb"/></svg>
</body></html>
